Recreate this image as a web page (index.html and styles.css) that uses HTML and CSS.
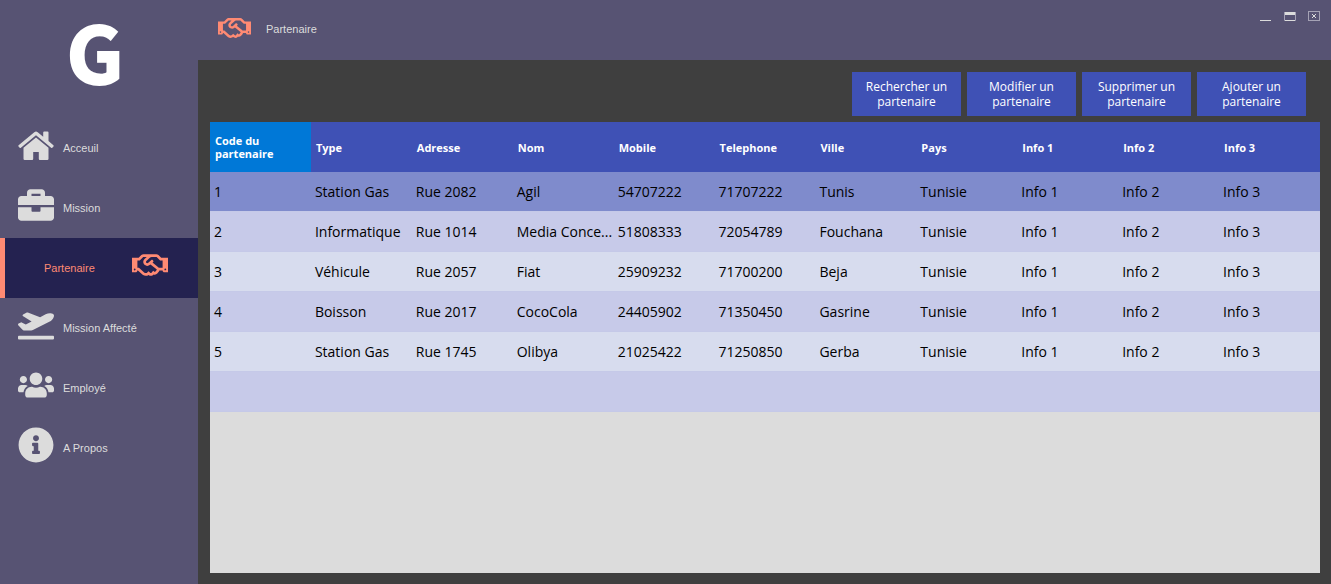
FILE: index.html
```html
<!DOCTYPE html>
<html lang="fr">
<head>
<meta charset="utf-8">
<title>Partenaire</title>
<link rel="stylesheet" href="styles.css">
</head>
<body>
<div class="app">
  <aside class="sidebar">
    <div class="logo">G</div>
    <nav class="menu">
      <button class="item" type="button">
        <svg class="icon" viewBox="0 0 36 36" aria-hidden="true"><path d="M18 4.500Q17.200 4.500 16.300 5.200L.6 18.200Q0 18.800.5 19.400L1.700 20.700Q2.300 21.200 2.900 20.700L18 8.200 33.100 20.700Q33.700 21.200 34.300 20.700L35.500 19.400Q36 18.800 35.400 18.200L30.500 14.100V5.500Q30.500 4.500 29.500 4.500H26.200Q25.200 4.500 25.200 5.500V9.700L19.700 5.200Q18.800 4.500 18 4.500Z"/><path d="M18 10.500L5.500 20.800V31.800Q5.500 33 6.700 33H14.200Q15.200 33 15.200 31.800V25H20.800V31.800Q20.800 33 21.800 33H29.300Q30.500 33 30.500 31.800V20.800Z"/></svg>
        <span>Acceuil</span>
      </button>
      <button class="item" type="button">
        <svg class="icon" viewBox="0 0 512 512" aria-hidden="true"><path d="M320 336c0 8.840-7.160 16-16 16h-96c-8.840 0-16-7.160-16-16v-48H0v144c0 25.600 22.400 48 48 48h416c25.600 0 48-22.400 48-48V288H320v48zm144-208h-80V80c0-25.600-22.400-48-48-48H176c-25.600 0-48 22.400-48 48v48H48c-25.600 0-48 22.400-48 48v80h512v-80c0-25.600-22.400-48-48-48zm-144 0H192V96h128v32z"/></svg>
        <span>Mission</span>
      </button>
      <button class="item active" type="button" aria-current="page">
        <span>Partenaire</span>
        <svg class="icon" viewBox="0 0 640 512" aria-hidden="true"><path d="M519.2 127.9l-47.6-47.6A56.252 56.252 0 0 0 432 64H205.2c-14.8 0-29.1 5.900-39.6 16.300L118 127.900H0v255.700h64c17.600 0 31.800-14.200 31.900-31.700h9.100l84.600 76.400c30.900 25.100 73.800 25.700 105.600 3.800 12.500 10.800 26 15.900 41.100 15.900 18.200 0 35.300-7.400 48.800-24 22.100 8.700 48.200 2.600 64-16.800l26.200-32.300c5.600-6.900 9.100-14.800 10.900-23h57.900c.1 17.500 14.400 31.700 31.900 31.700h64V127.900H519.200zM48 351.600c-8.800 0-16-7.200-16-16s7.200-16 16-16 16 7.200 16 16c0 8.900-7.200 16-16 16zm390-6.900l-26.100 32.200c-2.800 3.400-7.800 4-11.300 1.200l-23.900-19.400-30 36.500c-6 7.300-15 4.800-18 2.400l-36.800-31.500-15.600 19.200c-13.900 17.100-39.200 19.700-55.300 6.600l-97.300-88H96V175.800h41.900l61.700-61.600c2-.8 3.700-1.500 5.700-2.300H262l-38.700 35.500c-29.400 26.900-31.100 72.300-4.400 101.300 14.800 16.200 61.200 41.200 101.500 4.400l8.200-7.500 108.200 87.800c3.400 2.800 3.900 7.900 1.200 11.300zm106-40.800h-69.200c-2.300-2.800-4.900-5.400-7.700-7.700l-102.700-83.400 12.500-11.400c6.500-6 7-16.100 1-22.600L367 167.100c-6-6.500-16.100-6.900-22.600-1l-55.200 50.600c-9.500 8.700-25.700 9.400-34.600 0-9.300-9.900-8.500-25.100 1.200-33.900l65.600-60.100c7.400-6.800 17-10.500 27-10.500l83.700-.2c2.100 0 4.100.8 5.500 2.300l61.700 61.600H544v128zm48 47.700c-8.800 0-16-7.200-16-16s7.200-16 16-16 16 7.200 16 16c0 8.900-7.200 16-16 16z"/></svg>
      </button>
      <button class="item" type="button">
        <svg class="icon" viewBox="0 0 640 512" aria-hidden="true"><path d="M624 448H16c-8.840 0-16 7.160-16 16v32c0 8.840 7.160 16 16 16h608c8.840 0 16-7.160 16-16v-32c0-8.840-7.160-16-16-16zM80.550 341.270c6.280 6.840 15.100 10.720 24.330 10.710l130.540-.18a65.620 65.620 0 0 0 29.640-7.120l290.960-147.650c26.740-13.570 50.710-32.940 67.020-58.310 18.310-28.480 20.300-49.090 13.070-63.650-7.210-14.570-24.740-25.270-58.250-27.450-29.850-1.940-59.540 5.920-86.280 19.480l-98.510 49.990-218.700-82.060a17.799 17.799 0 0 0-18-1.110L90.620 67.290c-10.670 5.410-13.250 19.650-5.170 28.530l156.220 98.100-103.210 52.380-72.350-36.470a17.804 17.804 0 0 0-16.070.02L9.910 230.220c-10.440 5.300-13.190 19.120-5.570 28.080l76.210 82.970z"/></svg>
        <span>Mission Affecté</span>
      </button>
      <button class="item" type="button">
        <svg class="icon" viewBox="0 0 640 512" aria-hidden="true"><path d="M96 224c35.300 0 64-28.700 64-64s-28.700-64-64-64-64 28.700-64 64 28.700 64 64 64zm448 0c35.300 0 64-28.700 64-64s-28.700-64-64-64-64 28.700-64 64 28.700 64 64 64zm32 32h-64c-17.600 0-33.500 7.100-45.100 18.600 40.300 22.100 68.900 62 75.100 109.400h66c17.700 0 32-14.300 32-32v-32c0-35.300-28.700-64-64-64zm-256 0c61.900 0 112-50.100 112-112S381.900 32 320 32 208 82.100 208 144s50.100 112 112 112zm76.800 32h-8.300c-20.800 10-43.900 16-68.500 16s-47.600-6-68.500-16h-8.300C179.600 288 128 339.600 128 403.200V432c0 26.500 21.500 48 48 48h288c26.500 0 48-21.500 48-48v-28.800c0-63.600-51.600-115.200-115.200-115.200zm-223.700-13.400C161.500 263.100 145.600 256 128 256H64c-35.300 0-64 28.700-64 64v32c0 17.700 14.300 32 32 32h65.900c6.300-47.400 34.900-87.300 75.200-109.400z"/></svg>
        <span>Employé</span>
      </button>
      <button class="item" type="button">
        <svg class="icon" viewBox="0 0 512 512" aria-hidden="true"><path d="M256 8C119.043 8 8 119.083 8 256c0 136.997 111.043 248 248 248s248-111.003 248-248C504 119.083 392.957 8 256 8zm0 110c23.196 0 42 18.804 42 42s-18.804 42-42 42-42-18.804-42-42 18.804-42 42-42zm56 254c0 6.627-5.373 12-12 12h-88c-6.627 0-12-5.373-12-12v-24c0-6.627 5.373-12 12-12h12v-64h-12c-6.627 0-12-5.373-12-12v-24c0-6.627 5.373-12 12-12h64c6.627 0 12 5.373 12 12v100h12c6.627 0 12 5.373 12 12v24z"/></svg>
        <span>A Propos</span>
      </button>
    </nav>
  </aside>

  <div class="content">
    <header class="titlebar">
      <svg class="title-icon" viewBox="0 0 640 512" aria-hidden="true"><path d="M519.2 127.9l-47.6-47.6A56.252 56.252 0 0 0 432 64H205.2c-14.8 0-29.1 5.900-39.6 16.300L118 127.900H0v255.700h64c17.600 0 31.800-14.200 31.900-31.700h9.100l84.600 76.400c30.900 25.100 73.800 25.700 105.600 3.800 12.500 10.800 26 15.900 41.100 15.900 18.200 0 35.300-7.400 48.800-24 22.100 8.700 48.200 2.600 64-16.800l26.200-32.300c5.600-6.900 9.100-14.800 10.900-23h57.900c.1 17.500 14.400 31.700 31.900 31.700h64V127.900H519.200zM48 351.600c-8.800 0-16-7.200-16-16s7.200-16 16-16 16 7.200 16 16c0 8.900-7.200 16-16 16zm390-6.900l-26.100 32.200c-2.800 3.400-7.800 4-11.300 1.200l-23.900-19.400-30 36.500c-6 7.300-15 4.800-18 2.400l-36.800-31.500-15.600 19.200c-13.900 17.100-39.200 19.700-55.300 6.600l-97.300-88H96V175.800h41.900l61.700-61.600c2-.8 3.700-1.500 5.700-2.300H262l-38.700 35.500c-29.400 26.900-31.100 72.300-4.400 101.300 14.800 16.200 61.200 41.200 101.500 4.400l8.200-7.500 108.200 87.800c3.400 2.800 3.900 7.900 1.200 11.300zm106-40.800h-69.200c-2.300-2.800-4.900-5.400-7.700-7.700l-102.700-83.400 12.500-11.400c6.500-6 7-16.100 1-22.600L367 167.100c-6-6.500-16.100-6.900-22.600-1l-55.200 50.600c-9.500 8.700-25.700 9.400-34.600 0-9.300-9.900-8.500-25.100 1.200-33.900l65.600-60.100c7.400-6.800 17-10.500 27-10.500l83.700-.2c2.100 0 4.100.8 5.500 2.300l61.700 61.600H544v128zm48 47.700c-8.800 0-16-7.200-16-16s7.200-16 16-16 16 7.200 16 16c0 8.900-7.200 16-16 16z"/></svg>
      <h1 class="title">Partenaire</h1>
      <div class="window-controls">
        <button class="control" type="button" aria-label="Réduire"><svg viewBox="0 0 12 12"><path fill="#dcdcdc" d="M0 10h11v1H0z"/></svg></button>
        <button class="control" type="button" aria-label="Agrandir"><svg viewBox="0 0 12 12"><path fill="#dcdcdc" d="M1 2h10v3H1z"/><path fill="none" stroke="#a5a2b5" d="M.5 2v8.500h11V2"/><path fill="#dcdcdc" d="M1 10h10v1H1z"/></svg></button>
        <button class="control" type="button" aria-label="Fermer"><svg viewBox="0 0 12 12"><path fill="none" stroke="#a5a2b5" d="M1 1.500h10M1 10.500h10M.5 1v10M11.500 1v10"/><path fill="none" stroke="#dcdcdc" d="M4 4l4 4M8 4l-4 4"/></svg></button>
      </div>
    </header>

    <main class="page">
      <div class="actions">
        <button class="action" type="button">Rechercher un partenaire</button>
        <button class="action" type="button">Modifier un partenaire</button>
        <button class="action" type="button">Supprimer un partenaire</button>
        <button class="action" type="button">Ajouter un partenaire</button>
      </div>
      <div class="grid">
        <table class="partners">
          <thead>
            <tr><th class="current" scope="col">Code du partenaire</th><th scope="col">Type</th><th scope="col">Adresse</th><th scope="col">Nom</th><th scope="col">Mobile</th><th scope="col">Telephone</th><th scope="col">Ville</th><th scope="col">Pays</th><th scope="col">Info 1</th><th scope="col">Info 2</th><th scope="col">Info 3</th></tr>
          </thead>
          <tbody>
            <tr class="selected"><td>1</td><td>Station Gas</td><td>Rue 2082</td><td>Agil</td><td>54707222</td><td>71707222</td><td>Tunis</td><td>Tunisie</td><td>Info 1</td><td>Info 2</td><td>Info 3</td></tr>
            <tr><td>2</td><td>Informatique</td><td>Rue 1014</td><td>Media Conce...</td><td>51808333</td><td>72054789</td><td>Fouchana</td><td>Tunisie</td><td>Info 1</td><td>Info 2</td><td>Info 3</td></tr>
            <tr><td>3</td><td>Véhicule</td><td>Rue 2057</td><td>Fiat</td><td>25909232</td><td>71700200</td><td>Beja</td><td>Tunisie</td><td>Info 1</td><td>Info 2</td><td>Info 3</td></tr>
            <tr><td>4</td><td>Boisson</td><td>Rue 2017</td><td>CocoCola</td><td>24405902</td><td>71350450</td><td>Gasrine</td><td>Tunisie</td><td>Info 1</td><td>Info 2</td><td>Info 3</td></tr>
            <tr><td>5</td><td>Station Gas</td><td>Rue 1745</td><td>Olibya</td><td>21025422</td><td>71250850</td><td>Gerba</td><td>Tunisie</td><td>Info 1</td><td>Info 2</td><td>Info 3</td></tr>
            <tr><td></td><td></td><td></td><td></td><td></td><td></td><td></td><td></td><td></td><td></td><td></td></tr>
          </tbody>
        </table>
      </div>
    </main>
  </div>
</div>
</body>
</html>
```

FILE: styles.css
```css
* {
  box-sizing: border-box;
}

body {
  margin: 0;
  font-family: "Open Sans", "Noto Sans", sans-serif;
  background: #3f3f3f;
}

button {
  border: 0;
  padding: 0;
  background: none;
  font: inherit;
  color: inherit;
  cursor: pointer;
}

.app {
  display: flex;
  min-height: 100vh;
}

.sidebar {
  flex: 0 0 198px;
  background: #575373;
  color: #dcdcdc;
}

.logo {
  height: 118px;
  padding-right: 8px;
  font-family: "Noto Sans CJK SC", sans-serif;
  font-size: 80px;
  font-weight: 900;
  line-height: 100px;
  text-align: center;
  color: #fff;
}

.menu {
  display: flex;
  flex-direction: column;
}

.item {
  display: flex;
  align-items: center;
  gap: 9px;
  height: 60px;
  padding-left: 18px;
  font-family: "Liberation Sans", Arial, sans-serif;
  font-size: 11px;
  text-align: left;
}

.icon {
  width: 36px;
  height: 36px;
  margin-bottom: 6px;
  fill: currentColor;
}

.item.active {
  justify-content: space-between;
  padding: 0 30px 0 39px;
  border-left: 5px solid #ff8a73;
  background: #242250;
  color: #ff8a73;
}

.content {
  flex: 1;
  min-width: 0;
  display: flex;
  flex-direction: column;
}

.titlebar {
  display: flex;
  align-items: center;
  height: 60px;
  padding: 0 11px 2px 20px;
  background: #575373;
  color: #dcdcdc;
}

.title-icon {
  width: 33px;
  height: 28px;
  margin-bottom: 2px;
  fill: #ff8a73;
}

.title {
  margin: 0 0 0 15px;
  font-family: "Liberation Sans", Arial, sans-serif;
  font-size: 11px;
  font-weight: 400;
}

.window-controls {
  display: flex;
  align-self: flex-start;
  gap: 12px;
  margin-left: auto;
  padding-top: 10px;
}

.control {
  width: 12px;
  height: 12px;
}

.control svg {
  display: block;
}

.page {
  flex: 1;
  display: flex;
  flex-direction: column;
  gap: 6px;
  padding: 12px 11px 11px 12px;
}

.actions {
  display: flex;
  justify-content: flex-end;
  gap: 6px;
  padding-right: 14px;
}

.action {
  width: 109px;
  height: 44px;
  padding: 0 12px;
  background: #3f51b5;
  color: #fff;
  font-size: 12px;
  line-height: 15px;
}

.grid {
  flex: 1;
  background: #dcdcdc;
}

.partners {
  width: 100%;
  table-layout: fixed;
  border-collapse: separate;
  border-spacing: 0;
}

.partners th {
  height: 50px;
  padding: 0 5px;
  background: #3f51b5;
  color: #fff;
  font-size: 11px;
  font-weight: 700;
  line-height: 13px;
  text-align: left;
}

.partners th.current {
  background: #0078d7;
}

.partners td {
  height: 40px;
  padding: 0 4px;
  border-bottom: 1px solid #c5c9e8;
  background: #d7dcee;
  color: #000;
  font-size: 14px;
  white-space: nowrap;
}

.partners tr:nth-child(even) td {
  background: #c7cae9;
}

.partners tr.selected td {
  background: #7f8bcc;
}
```
